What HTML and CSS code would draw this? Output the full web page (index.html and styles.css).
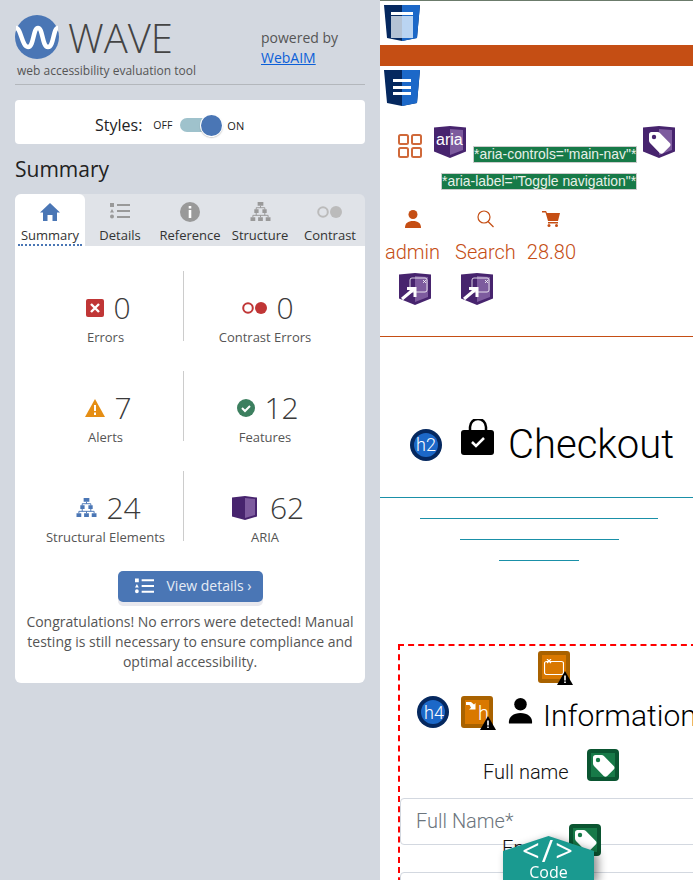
FILE: index.html
```html
<!DOCTYPE html>
<html>
  <head>
    <title>WAVE Checkout</title>
    <link rel="stylesheet" href="styles.css">
  </head>
  <body>
    <svg class="defs" width="0" height="0">
      <symbol id="shield" viewBox="0 0 32 32">
        <path d="M0 1.500 16 0l16 1.500v24L16 32 0 25.500z" fill="var(--dark)"/>
        <path d="M16 3 29 4v20l-13 5z" fill="var(--light)"/>
      </symbol>
      <symbol id="tag" viewBox="0 0 32 32">
        <path d="M6 8.500c0-1.500 1-2.500 2.500-2.500h6c1 0 1.700.3 2.400 1l9.800 10c1.100 1.100 1.100 2.400 0 3.500l-6.500 6.500c-1.100 1.100-2.400 1.100-3.500 0L7 17c-.7-.7-1-1.400-1-2.400z" fill="#fff"/>
        <circle cx="11" cy="11" r="2.200" fill="var(--dark)"/>
      </symbol>
      <symbol id="flow" viewBox="0 0 32 32">
        <rect x="11" y="5" width="17" height="14" rx="2" fill="none" stroke="#fff" stroke-width=".8"/>
        <path d="M24 7l3 3m0-3-3 3" stroke="#fff" stroke-width=".8"/>
        <path d="M3 26 15 16M8 15.500h8V24" fill="none" stroke="#fff" stroke-width="3"/>
      </symbol>
      <symbol id="warn" viewBox="0 0 16 14">
        <path d="M8 0 16 14H0z" fill="#000"/>
        <path d="M7.200 4.500h1.600v5H7.200zM7.200 10.500h1.600V12H7.200z" fill="#fff"/>
      </symbol>
      <symbol id="tree" viewBox="0 0 21 21">
        <path d="M7.500 0h6v4h-6zM4 7.500h4.500v4H4zM12.500 7.500H17v4h-4.500zM0 16h5v4H0zM8 16h5v4H8zM16 16h5v4h-5z"/>
        <path d="M10.500 4v2M6 6h9M6 6v2M15 6v2M6 11v3M15 11v3M2.500 14h16M2.500 14v2M10.500 14v2M18.500 14v2" fill="none" stroke="currentColor"/>
      </symbol>
      <symbol id="list" viewBox="0 0 20 16">
        <path d="M0 0h4v4H0zM2 6l2 3.500H0zM2 11.500a2 2 0 1 1 0 4 2 2 0 0 1 0-4zM7 1h13v2H7zM7 7h13v2H7zM7 13h13v2H7z"/>
      </symbol>
    </svg>

    <aside class="sidebar">
      <header class="brand">
        <div class="brand-main">
          <div class="logo-row">
            <svg class="logo" viewBox="0 0 44 44">
              <circle cx="22" cy="22" r="22" fill="#4a76b5"/>
              <path d="M1 13C6 13 7 32 13 32 19 32 18 13 23 13 28 13 27 32 33 32 39 32 38 13 43 13" fill="none" stroke="#fff" stroke-width="4.500"/>
            </svg>
            <span class="logo-text">WAVE</span>
          </div>
          <div class="tagline">web accessibility evaluation tool</div>
        </div>
        <div class="powered">powered by<br><a href="#">WebAIM</a></div>
      </header>

      <div class="styles-card">
        <span class="styles-label">Styles:</span>
        <span class="toggle-word">OFF</span>
        <span class="toggle"><span class="knob"></span></span>
        <span class="toggle-word on-word">ON</span>
      </div>

      <h2 class="summary-title">Summary</h2>

      <div class="tabs">
        <div class="tab active">
          <svg class="tab-icon" viewBox="0 0 20 18"><path d="M10 0 20 9.500h-3V18h-4.500v-6h-5v6H3V9.500H0z" fill="#4a76b5"/></svg>
          <span class="tab-label">Summary</span>
        </div>
        <div class="tab">
          <svg class="tab-icon list-icon"><use href="#list"/></svg>
          <span class="tab-label">Details</span>
        </div>
        <div class="tab">
          <svg class="tab-icon" viewBox="0 0 20 20"><circle cx="10" cy="10" r="10" fill="#999"/><path d="M8.700 4h2.600v2.500H8.700zM8.700 8h2.600v8H8.700z" fill="#fff"/></svg>
          <span class="tab-label">Reference</span>
        </div>
        <div class="tab">
          <svg class="tab-icon tree-gray"><use href="#tree"/></svg>
          <span class="tab-label">Structure</span>
        </div>
        <div class="tab">
          <svg class="tab-icon contrast-icon" viewBox="0 0 26 12"><circle cx="6" cy="6" r="4.800" fill="none" stroke="#bbb" stroke-width="2"/><circle cx="19" cy="6" r="6" fill="#bbb"/></svg>
          <span class="tab-label">Contrast</span>
        </div>
      </div>

      <div class="panel">
        <div class="stats">
          <div class="stat">
            <div class="stat-top">
              <svg class="stat-icon" width="18" height="18" viewBox="0 0 18 18"><rect width="18" height="18" rx="2" fill="#c03636"/><path d="M5 5l8 8m0-8-8 8" stroke="#fff" stroke-width="2.400"/></svg>
              <span class="num">0</span>
            </div>
            <div class="stat-label">Errors</div>
          </div>
          <div class="stat">
            <div class="stat-top">
              <svg class="stat-icon" width="25" height="12" viewBox="0 0 25 12"><circle cx="6" cy="6" r="4.800" fill="none" stroke="#c03636" stroke-width="2"/><circle cx="19" cy="6" r="6" fill="#c03636"/></svg>
              <span class="num">0</span>
            </div>
            <div class="stat-label">Contrast Errors</div>
          </div>
          <div class="stat">
            <div class="stat-top">
              <svg class="stat-icon" width="20" height="18" viewBox="0 0 20 18"><path d="M10 0 20 18H0z" fill="#e58e14"/><path d="M9 6h2v6H9zM9 13.500h2V16H9z" fill="#fff"/></svg>
              <span class="num">7</span>
            </div>
            <div class="stat-label">Alerts</div>
          </div>
          <div class="stat">
            <div class="stat-top">
              <svg class="stat-icon" width="18" height="18" viewBox="0 0 18 18"><circle cx="9" cy="9" r="9" fill="#3c7f5f"/><path d="M5 9l3 3 5-5" fill="none" stroke="#fff" stroke-width="2"/></svg>
              <span class="num">12</span>
            </div>
            <div class="stat-label">Features</div>
          </div>
          <div class="stat">
            <div class="stat-top">
              <svg class="stat-icon tree-blue" width="21" height="20"><use href="#tree"/></svg>
              <span class="num">24</span>
            </div>
            <div class="stat-label">Structural Elements</div>
          </div>
          <div class="stat">
            <div class="stat-top wide-gap">
              <svg class="stat-icon aria-mini" width="25" height="24" viewBox="0 0 25 24"><path d="M0 1.500 13 0l12 1.500v19L13 24 0 20.500z" fill="#47246e"/><path d="M13 2l10 1v16l-10 3z" fill="#7d5b9e"/></svg>
              <span class="num">62</span>
            </div>
            <div class="stat-label">ARIA</div>
          </div>
        </div>

        <a class="view-btn" href="#">
          <svg class="view-icon"><use href="#list"/></svg>
          <span>View details ›</span>
        </a>

        <p class="congrats">Congratulations! No errors were detected! Manual testing is still necessary to ensure compliance and optimal accessibility.</p>
      </div>
    </aside>

    <main class="page">
      <div class="top-row">
        <svg class="shield blue" width="36" height="36" viewBox="0 0 36 36">
          <path d="M0 0h36l-3 33-15 3-15-3z" fill="#05285f"/>
          <path d="M18 0h18l-3 33-15 3z" fill="#1c68c8"/>
          <path d="M7 11h11v22H7z" fill="#b4c2d4"/>
          <path d="M18 11h11v22H18z" fill="#bad4f2"/>
          <path d="M7 7h22v3H7z" fill="#fff"/>
        </svg>
      </div>
      <div class="orange-bar"></div>
      <div class="top-row second">
        <svg class="shield blue" width="36" height="36" viewBox="0 0 36 36">
          <path d="M0 0h36l-3 33-15 3-15-3z" fill="#05285f"/>
          <path d="M18 0h18l-3 33-15 3z" fill="#1c68c8"/>
          <path d="M9 9h18v3H9zM9 16h18v3H9zM9 22h18v3H9z" fill="#fff"/>
        </svg>
      </div>

      <div class="toggle-row">
        <svg class="grid-icon" width="24" height="24" viewBox="0 0 24 24"><g fill="none" stroke="#d0693a" stroke-width="2"><rect x="1" y="1" width="9" height="9" rx="1.500"/><rect x="14" y="1" width="9" height="9" rx="1.500"/><rect x="1" y="14" width="9" height="9" rx="1.500"/><rect x="14" y="14" width="9" height="9" rx="1.500"/></g></svg>
        <span class="aria-badge"><svg class="badge-svg purple"><use href="#shield"/></svg><span class="aria-word">aria</span></span>
        <span class="attr attr-first">*aria-controls="main-nav"*</span>
        <svg class="badge-svg purple tag-badge"><use href="#shield"/><use href="#tag"/></svg>
      </div>
      <div class="attr-row"><span class="attr">*aria-label="Toggle navigation"*</span></div>

      <div class="nav-row">
        <div class="nav-item admin">
          <svg width="16" height="18" viewBox="0 0 16 18"><circle cx="8" cy="4.500" r="4.500" fill="#c54e14"/><path d="M0 18c0-5 3-7 8-7s8 2 8 7z" fill="#c54e14"/></svg>
          <span>admin</span>
        </div>
        <div class="nav-item search">
          <svg width="17" height="18" viewBox="0 0 17 18"><circle cx="7" cy="7" r="6" fill="none" stroke="#c54e14" stroke-width="1.200"/><path d="M11 11.500 16.500 17" stroke="#c54e14" stroke-width="1.200"/></svg>
          <span>Search</span>
        </div>
        <div class="nav-item cart">
          <svg width="18" height="16" viewBox="0 0 18 16"><path d="M0 0h4l1 2h13l-2 8H6L3.500 1.500H0z" fill="#c54e14"/><path d="M6 11h10v1.500H6z" fill="#c54e14"/><circle cx="7" cy="14.500" r="1.500" fill="#c54e14"/><circle cx="14.500" cy="14.500" r="1.500" fill="#c54e14"/></svg>
          <span>28.80</span>
        </div>
      </div>
      <div class="flow-row">
        <svg class="badge-svg purple"><use href="#shield"/><use href="#flow"/></svg>
        <svg class="badge-svg purple"><use href="#shield"/><use href="#flow"/></svg>
      </div>

      <div class="checkout-band">
        <svg class="h-badge" width="32" height="32" viewBox="0 0 32 32"><circle cx="16" cy="16" r="16" fill="#05285f"/><circle cx="16" cy="16" r="12" fill="#1c68c8"/></svg>
        <span class="h-text h2">h2</span>
        <svg class="bag" width="34" height="36" viewBox="0 0 34 36"><path d="M9 12V8a8 8 0 0 1 16 0v4" fill="none" stroke="#000" stroke-width="2.500"/><rect y="11" width="33" height="25" rx="3"/><path d="M11 23l4 4 8-8" fill="none" stroke="#fff" stroke-width="2.500"/></svg>
        <h2 class="checkout-title">Checkout</h2>
      </div>

      <div class="steps">
        <a class="step step-a" href="#"></a>
        <a class="step step-b" href="#"></a>
        <a class="step step-c" href="#"></a>
      </div>

      <form class="info-box">
        <div class="warn-top">
          <span class="orange-badge">
            <svg width="20" height="16" viewBox="0 0 20 16"><rect x=".5" y="2.500" width="19" height="13" rx="2" fill="none" stroke="#fff" stroke-width="1.200"/><path d="M3 0l4 4m0-4-4 4" stroke="#fff" stroke-width="1.200"/></svg>
            <svg class="warn"><use href="#warn"/></svg>
          </span>
        </div>
        <div class="info-head">
          <svg class="h-badge" width="32" height="32" viewBox="0 0 32 32"><circle cx="16" cy="16" r="16" fill="#05285f"/><circle cx="16" cy="16" r="12" fill="#1c68c8"/></svg>
          <span class="h-text h4">h4</span>
          <span class="orange-badge skip">
            <svg class="skip-arrow" width="11" height="9" viewBox="0 0 11 9"><path d="M0 1h5l3 2.500L9.500 2v6.500H3l2-1.800L3.500 4H0z" fill="#fff"/></svg>
            <span class="skip-h">h</span>
            <svg class="warn"><use href="#warn"/></svg>
          </span>
          <svg class="person" width="25" height="27" viewBox="0 0 26 27"><circle cx="13" cy="7" r="6.500"/><path d="M1 27c-1-7 5-11 12-11s13 4 12 11z"/></svg>
          <h4 class="info-title">Information</h4>
        </div>
        <div class="name-row">
          <label class="name-label">Full name</label>
          <svg class="badge-svg green-tag name-tag" viewBox="0 0 32 32"><rect width="32" height="32" rx="4" fill="#0a5531"/><rect x="4" y="4" width="24" height="24" fill="#177a48"/><use href="#tag"/></svg>
        </div>
        <div class="input">Full Name*</div>
        <div class="input second-input"></div>
      </form>
    </main>

    <span class="hidden-label">Email</span>
    <svg class="badge-svg green-tag floating-tag" viewBox="0 0 32 32"><rect width="32" height="32" rx="4" fill="#0a5531"/><rect x="4" y="4" width="24" height="24" fill="#177a48"/><use href="#tag"/></svg>

    <div class="code-wrap">
      <div class="code-tab">
        <span class="code-mark">&lt;/&gt;</span>
        <span class="code-word">Code</span>
      </div>
    </div>
  </body>
</html>
```

FILE: styles.css
```css
* {
  box-sizing: border-box;
}
html, body {
  margin: 0;
  height: 880px;
  overflow: hidden;
}
body {
  display: flex;
  position: relative;
  width: 693px;
  font-family: 'Open Sans', sans-serif;
  background-color: #fff;
}
.defs {
  position: absolute;
}

/* sidebar */
.sidebar {
  width: 380px;
  height: 880px;
  flex: none;
  padding: 15px 15px 0;
  background-color: #d3d8e0;
}
.brand {
  display: flex;
  height: 70px;
  border-bottom: 1px solid #b3b7bc;
}
.brand-main {
  width: 246px;
}
.logo-row {
  display: flex;
  align-items: center;
  height: 44px;
}
.logo {
  width: 44px;
  height: 44px;
}
.logo-text {
  margin-left: 9px;
  font-size: 40px;
  font-weight: 300;
  color: #444;
}
.tagline {
  margin: 3px 0 0 2px;
  font-size: 12px;
  line-height: 18px;
  color: #555;
}
.powered {
  margin-top: 13px;
  font-size: 14px;
  line-height: 20px;
  color: #555;
}
.powered a {
  color: #0b5fd8;
}
.styles-card {
  display: flex;
  align-items: center;
  height: 44px;
  margin-top: 15px;
  padding: 6px 0 0 80px;
  border-radius: 4px;
  background-color: #fff;
}
.styles-label {
  font-size: 16px;
  color: #222;
  margin-right: 11px;
}
.toggle-word {
  font-size: 10.500px;
  color: #222;
}
.on-word {
  font-size: 11px;
}
.toggle {
  position: relative;
  width: 36px;
  height: 14px;
  margin: 0 11px 0 8px;
  border-radius: 7px;
  background-color: #9fc2cc;
}
.knob {
  position: absolute;
  top: -3px;
  right: -6px;
  width: 21px;
  height: 21px;
  border-radius: 50%;
  background-color: #4a76b5;
  box-shadow: 0 0 0 1px #fff, 0 1px 2px #555;
}
.summary-title {
  margin: 10px 0 10px;
  font-size: 21px;
  line-height: 30px;
  font-weight: 400;
  color: #222;
}
.tabs {
  display: flex;
  height: 52px;
  border-radius: 6px 6px 0 0;
  background-color: #e0e3e8;
}
.tab {
  display: flex;
  flex-direction: column;
  align-items: center;
  width: 70px;
  padding-top: 8px;
  color: #999;
}
.tab.active {
  background-color: #fff;
  border-radius: 6px 6px 0 0;
}
.tab-icon {
  width: 20px;
  height: 20px;
  fill: #999;
}
.list-icon {
  height: 18px;
  margin-bottom: 2px;
}
.tree-gray {
  width: 21px;
  height: 20px;
  color: #999;
}
.contrast-icon {
  width: 26px;
}
.tab-label {
  margin-top: 4px;
  font-size: 13px;
  line-height: 18px;
  color: #333;
}
.tab.active .tab-label {
  padding: 0 3px;
  border-bottom: 2px dotted #4a76b5;
  height: 20px;
}
.panel {
  height: 437px;
  padding-top: 25px;
  border-radius: 0 0 6px 6px;
  background-color: #fff;
}
.stats {
  display: grid;
  grid-template-columns: 168.500px 181.500px;
  grid-auto-rows: 70px;
  row-gap: 30px;
}
.stat {
  display: flex;
  flex-direction: column;
  align-items: center;
  padding-right: 18.500px;
}
.stat:nth-child(odd) {
  border-right: 1px solid #ccc;
  padding: 0 0 0 13.500px;
}
.stat-top {
  display: flex;
  align-items: center;
  gap: 9px;
  height: 36px;
  margin-top: 19px;
  padding-left: 6px;
}
.wide-gap {
  gap: 13px;
}
.num {
  font-size: 30px;
  font-weight: 300;
  color: #3a3a3a;
  line-height: 36px;
}
.stat-label {
  margin-top: 2px;
  font-size: 13px;
  line-height: 18px;
  color: #555;
  white-space: nowrap;
}
.tree-blue {
  color: #4a76b5;
  fill: #4a76b5;
}
.view-btn {
  display: flex;
  align-items: center;
  width: 145px;
  height: 31px;
  margin: 30px auto 0;
  padding: 0 0 2px 17px;
  border-radius: 5px;
  background-color: #4a76b5;
  box-shadow: 0 4px 0 #e8e8ee;
  color: #e6ecf5;
  font-size: 14px;
  text-decoration: none;
}
.view-icon {
  width: 19px;
  height: 16px;
  margin-right: 13px;
  fill: #fff;
}
.congrats {
  margin: 10px 0 0;
  padding: 0 10px;
  text-align: center;
  font-size: 14px;
  line-height: 20px;
  color: #555;
}

/* page on the right */
.page {
  width: 313px;
  height: 880px;
  flex: none;
  overflow: hidden;
  border-top: 1px solid #6b7b6b;
  font-family: Roboto, sans-serif;
  font-weight: 300;
}
.top-row {
  height: 44px;
  padding: 4px 0 0 4px;
}
.top-row.second {
  height: 60px;
}
.orange-bar {
  height: 21px;
  background-color: #c54e14;
}
.badge-svg {
  display: block;
  flex: none;
  width: 32px;
  height: 32px;
}
.purple {
  --dark: #47246e;
  --light: #7d5b9e;
}
.green-tag {
  --dark: #177a48;
}
.toggle-row {
  display: flex;
  align-items: flex-start;
  height: 40px;
  padding-left: 18px;
}
.grid-icon {
  margin-top: 8px;
  flex: none;
}
.aria-badge {
  position: relative;
  margin-left: 12px;
  width: 32px;
  height: 32px;
  flex: none;
}
.aria-word {
  position: absolute;
  left: 2px;
  top: 5px;
  font-family: 'Liberation Sans', sans-serif;
  font-weight: 400;
  font-size: 16px;
  color: #fff;
}
.attr {
  display: inline-block;
  height: 17px;
  font-family: 'Liberation Sans', sans-serif;
  font-weight: 400;
  font-size: 13.900px;
  line-height: 15px;
  white-space: nowrap;
  border: 1px solid #ccc;
  background-color: #177a48;
  color: #e8f0e8;
}
.attr-first {
  margin: 20px 0 0 7px;
}
.tag-badge {
  margin-left: 6px;
}
.attr-row {
  height: 34px;
  padding: 5px 0 0 61px;
}
.nav-row {
  display: flex;
  height: 73px;
  color: #c54e14;
  font-size: 20px;
}
.nav-item {
  display: flex;
  flex-direction: column;
  align-items: center;
  padding-top: 10px;
}
.nav-item svg {
  height: 18px;
  margin-bottom: 12px;
}
.admin {
  margin-left: 5px;
}
.search {
  margin-left: 15px;
}
.cart {
  margin-left: 11px;
  font-weight: 350;
}
.flow-row {
  display: flex;
  gap: 30px;
  height: 64px;
  padding-left: 19px;
  border-bottom: 1px solid #c54e14;
}
.checkout-band {
  position: relative;
  display: flex;
  align-items: flex-start;
  height: 161px;
  padding: 82px 0 0 30px;
  border-bottom: 1px solid #1a90a8;
}
.h-badge {
  flex: none;
  margin-top: 10px;
}
.h-text {
  position: absolute;
  color: #fff;
  font-size: 18px;
  font-weight: 300;
}
.h2 {
  left: 36px;
  top: 97px;
}
.bag {
  flex: none;
  margin-left: 19px;
}
.checkout-title {
  margin: 2px 0 0 13px;
  font-size: 40px;
  font-weight: 300;
  line-height: 48px;
  color: #000;
}
.steps {
  display: flex;
  flex-direction: column;
  align-items: center;
  height: 146px;
  padding: 20px 0 0 5px;
}
.step {
  display: block;
  height: 1px;
  margin-bottom: 20px;
  background-color: #1a90a8;
}
.step-a {
  width: 238px;
}
.step-b {
  width: 159px;
}
.step-c {
  width: 80px;
}
.info-box {
  width: 400px;
  height: 300px;
  margin-left: 18px;
  border: 2px dashed #f00;
  border-right: none;
}
.warn-top {
  height: 41px;
  padding: 5px 0 0 138px;
}
.orange-badge {
  position: relative;
  display: flex;
  align-items: center;
  justify-content: center;
  width: 32px;
  height: 32px;
  flex: none;
  border: 4px solid #a96200;
  border-radius: 3px;
  background-color: #d97800;
}
.warn {
  position: absolute;
  right: -7px;
  bottom: -6px;
  width: 16px;
  height: 14px;
}
.info-head {
  position: relative;
  display: flex;
  align-items: flex-start;
  height: 66px;
  padding: 9px 0 0 17px;
}
.info-head .h-badge {
  margin-top: 0;
}
.h4 {
  left: 24px;
  top: 15px;
}
.skip {
  margin-left: 12px;
}
.skip-arrow {
  position: absolute;
  left: 1px;
  top: 1px;
}
.skip-h {
  margin: 2px 0 0 13px;
  color: #fff;
  font-size: 20px;
  font-weight: 300;
}
.person {
  flex: none;
  margin: 1px 0 0 15px;
}
.info-title {
  margin: 1px 0 0 10px;
  font-size: 30px;
  font-weight: 300;
  line-height: 38px;
  white-space: nowrap;
  color: #000;
}
.name-row {
  display: flex;
  align-items: center;
  height: 37px;
  padding-left: 83px;
  gap: 18px;
}
.name-label {
  font-size: 20px;
  color: #111;
}
.name-tag {
  align-self: flex-start;
  margin-top: -4px;
}
.input {
  height: 47px;
  margin-top: 8px;
  padding-left: 15px;
  border: 1px solid #d3d8e0;
  border-radius: 4px;
  font-size: 20px;
  line-height: 44px;
  color: #6c757d;
}
.second-input {
  margin-top: 27px;
}

/* things lying over the page */
.hidden-label {
  position: absolute;
  left: 502px;
  top: 836px;
  font-family: Roboto, sans-serif;
  font-weight: 300;
  font-size: 20px;
  color: #111;
}
.floating-tag {
  position: absolute;
  left: 569px;
  top: 824px;
}
.code-wrap {
  position: absolute;
  left: 503px;
  top: 836px;
  filter: drop-shadow(4px 3px 5px rgba(0, 0, 0, 0.45));
}
.code-tab {
  display: flex;
  flex-direction: column;
  align-items: center;
  width: 91px;
  height: 44px;
  clip-path: polygon(0 15px, 50% 0, 100% 15px, 100% 100%, 0 100%);
  background-color: #1a9a90;
  color: #fff;
}
.code-mark {
  margin-top: -3px;
  font-size: 31px;
  line-height: 34px;
  letter-spacing: 2px;
  font-weight: 500;
  white-space: nowrap;
}
.code-word {
  margin-top: -5px;
  font-size: 16px;
  line-height: 20px;
}
```
